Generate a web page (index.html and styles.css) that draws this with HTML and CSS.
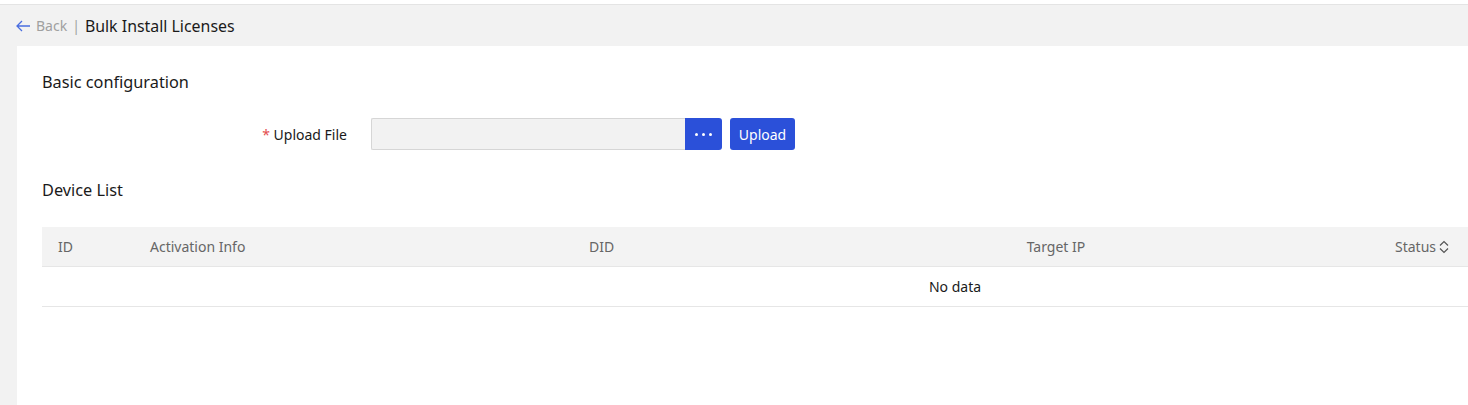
FILE: index.html
```html
<!DOCTYPE html>
<html>
<head>
<meta charset="utf-8">
<link rel="stylesheet" href="styles.css">
</head>
<body>
<div class="page">
  <div class="topbar">
    <a class="back">
      <svg class="back-icon" width="14" height="12" viewBox="0 0 14 12"><path d="M6 1L1 6l5 5M1 6h13" fill="none" stroke="#4a6ee0" stroke-width="1.3"/></svg>
      <span>Back</span>
    </a>
    <span class="sep">|</span>
    <span class="title">Bulk Install Licenses</span>
  </div>
  <div class="panel">
    <h2 class="section-title">Basic configuration</h2>
    <div class="form-row">
      <label class="form-label"><span class="req">*</span> Upload File</label>
      <div class="file-input">
        <div class="file-field"></div>
        <button class="dots-btn"><span class="dot"></span><span class="dot"></span><span class="dot"></span></button>
      </div>
      <button class="upload-btn">Upload</button>
    </div>
    <h2 class="section-title list-title">Device List</h2>
    <div class="table">
      <div class="thead">
        <div class="th">ID</div>
        <div class="th">Activation Info</div>
        <div class="th">DID</div>
        <div class="th center">Target IP</div>
        <div class="th right">Status
          <svg class="sort" width="10" height="14" viewBox="0 0 10 14"><path d="M1 5.5L5 1.5l4 4M1 8.5l4 4 4-4" fill="none" stroke="#555" stroke-width="1.2"/></svg>
        </div>
      </div>
      <div class="empty">No data</div>
    </div>
  </div>
</div>
</body>
</html>
```

FILE: styles.css
```css
* { box-sizing: border-box; }
html, body { margin: 0; padding: 0; }
body {
  font-family: "Noto Sans", "Segoe UI", sans-serif;
  color: #1f1f1f;
  background: #fff;
  width: 1468px;
  height: 405px;
  overflow: hidden;
}
.page {
  margin-top: 4px;
  border-top: 1px solid #e4e4e4;
  background: #f2f2f2;
  height: 401px;
  display: flex;
  flex-direction: column;
}
.topbar {
  height: 41px;
  display: flex;
  align-items: center;
  padding-left: 16px;
  font-size: 15px;
}
.back {
  display: flex;
  align-items: center;
  color: #a0a0a0;
  font-size: 14px;
}
.back-icon { margin-right: 6px; }
.sep { color: #a0a0a0; margin: 0 5px 0 5px; font-size: 14px; }
.title { color: #1a1a1a; font-size: 15.9px; }
.panel {
  flex: 1;
  margin-left: 17px;
  background: #fff;
  padding: 24px 0 0 25px;
}
.section-title {
  margin: 0;
  font-weight: normal;
  font-size: 16.3px;
  line-height: 24px;
  color: #1a1a1a;
}
.form-row {
  display: flex;
  align-items: center;
  margin-top: 24px;
  height: 32px;
}
.form-label {
  width: 329px;
  text-align: right;
  padding-right: 24px;
  font-size: 14px;
  color: #1a1a1a;
}
.req { color: #e34d4d; }
.file-input {
  display: flex;
  height: 32px;
}
.file-field {
  width: 314px;
  height: 32px;
  background: #f2f2f2;
  border: 1px solid #d6d6d6;
  border-right: none;
  border-radius: 2px 0 0 2px;
}
.dots-btn {
  width: 37px;
  height: 32px;
  border: none;
  background: #2b50d9;
  border-radius: 0 3px 3px 0;
  display: flex;
  align-items: center;
  justify-content: center;
  gap: 4px;
  padding: 0;
}
.dot { width: 3px; height: 3px; background: #fff; border-radius: 50%; }
.upload-btn {
  margin-left: 8px;
  height: 32px;
  width: 65px;
  border: none;
  border-radius: 3px;
  background: #2b50d9;
  color: #fff;
  font-family: inherit;
  font-size: 14px;
  padding: 0;
}
.list-title { margin-top: 28px; }
.table { margin-top: 25px; }
.thead {
  display: grid;
  grid-template-columns: 92px 439px 371px 224px 1fr;
  background: #f3f3f3;
  height: 40px;
  align-items: center;
  border-bottom: 1px solid #e6e6e6;
  font-size: 14px;
  color: #666;
}
.th { padding: 0 16px; }
.th.center { text-align: center; }
.th.right {
  text-align: right;
  padding-right: 19px;
  display: flex;
  justify-content: flex-end;
  align-items: center;
  gap: 3px;
}
.empty {
  height: 40px;
  border-bottom: 1px solid #e6e6e6;
  display: flex;
  align-items: center;
  justify-content: center;
  font-size: 14px;
  color: #1a1a1a;
  padding-left: 400px;
}
```
